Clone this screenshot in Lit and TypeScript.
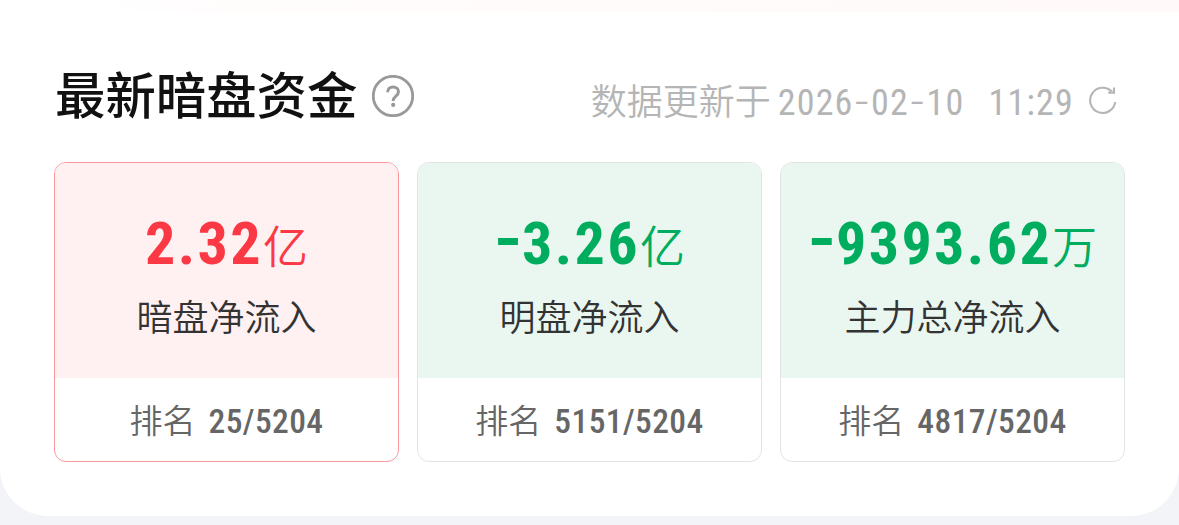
import { LitElement, html, css, svg } from 'lit';
import { customElement, property } from 'lit/decorators.js';

export type FlowTone = 'up' | 'down';

interface FlowItem {
  tone: FlowTone;
  value: string;
  unit: string;
  label: string;
  rank: string;
}

const FLOWS: FlowItem[] = [
  { tone: 'up', value: '2.32', unit: '亿', label: '暗盘净流入', rank: '25/5204' },
  { tone: 'down', value: '-3.26', unit: '亿', label: '明盘净流入', rank: '5151/5204' },
  { tone: 'down', value: '-9393.62', unit: '万', label: '主力总净流入', rank: '4817/5204' },
];

const helpIcon = svg`
  <circle cx="21" cy="21" r="19.7" stroke="#999" stroke-width="2.8" />
  <path d="M15.6 17.3c0-3.4 2.3-5.4 5.5-5.4s5.4 2 5.4 4.9c0 4.3-5.3 4.4-5.3 8.8v.4" stroke="#999" stroke-width="3" />
  <circle cx="21.2" cy="29.9" r="2.1" fill="#999" />
`;

const refreshIcon = svg`
  <path d="M26.2 16.2A12.6 12.6 0 1 1 22.8 5.6" stroke="#b5b5b5" stroke-width="2.1" />
  <path d="M19.2 6.6H25V1.6" stroke="#b5b5b5" stroke-width="2.1" />
`;

// Roboto's hyphen is too short beside these digits, so it gets its own span.
const withDashes = (text: string) =>
  text.split('-').map((part, i) => (i ? html`<span class="dash">-</span>${part}` : part));

@customElement('flow-card')
export class FlowCard extends LitElement {
  @property({ reflect: true }) tone: FlowTone = 'up';
  @property() value = '';
  @property() unit = '';
  @property() label = '';
  @property() rank = '';

  static styles = css`
    :host {
      display: flex;
      flex-direction: column;
      box-sizing: border-box;
      height: 300px;
      border: 1px solid #e2e4e4;
      border-radius: 12px;
      overflow: hidden;
      background: #fff;
    }
    :host([tone='up']) {
      --_fg: #fb3944;
      --_bg: #fff0f1;
      border-color: #fb969c;
    }
    :host([tone='down']) {
      --_fg: #00ad5e;
      --_bg: #eaf7f1;
    }
    .body {
      display: flex;
      flex: none;
      flex-direction: column;
      align-items: center;
      height: 215px;
      box-sizing: border-box;
      padding-top: 43px;
      background: var(--_bg);
    }
    .amount {
      display: flex;
      align-items: baseline;
      height: 76px;
      line-height: 76px;
      color: var(--_fg);
      white-space: nowrap;
    }
    .value {
      font-family: Roboto, sans-serif;
      font-size: 60px;
      font-weight: 700;
      font-stretch: 75%;
      letter-spacing: 2.4px;
    }
    .dash {
      font-family: Inter, sans-serif;
      letter-spacing: 0;
      line-height: 0;
      vertical-align: 5px;
    }
    .unit {
      font-size: 45px;
      font-weight: 350;
    }
    .label {
      height: 54px;
      margin-top: 6px;
      line-height: 54px;
      font-size: 36px;
      font-weight: 350;
      color: #333;
    }
    .rank {
      display: flex;
      flex: 1;
      align-items: baseline;
      justify-content: center;
      gap: 13px;
      line-height: 82px;
      font-size: 33px;
      font-weight: 350;
      color: #666;
    }
    .place {
      font-family: Roboto, sans-serif;
      font-size: 33.5px;
      font-weight: 500;
      font-stretch: 75%;
      letter-spacing: 0.4px;
    }
  `;

  render() {
    return html`
      <div class="body">
        <div class="amount"><span class="value">${withDashes(this.value)}</span><span class="unit">${this.unit}</span></div>
        <div class="label">${this.label}</div>
      </div>
      <div class="rank"><span>排名</span><span class="place">${this.rank}</span></div>
    `;
  }
}

@customElement('app-root')
export class AppRoot extends LitElement {
  static styles = css`
    :host {
      display: block;
      height: 525px;
      overflow: hidden;
      background: #f3f4f8;
      font-family: 'Noto Sans CJK SC', sans-serif;
    }
    .strip {
      height: 12px;
      background: linear-gradient(90deg, #fff 8%, #fffcfc 20%, #fffbfb 60%, #fff9f9);
    }
    .panel {
      box-sizing: border-box;
      height: 504px;
      padding: 48px 54px 0;
      border-radius: 0 0 48px 48px;
      background: #fff;
    }
    .head {
      display: flex;
      align-items: center;
      height: 74px;
    }
    .title {
      margin: 0 0 8px 1px;
      font-size: 50.4px;
      font-weight: 500;
      line-height: 74px;
      color: #111;
    }
    svg {
      display: block;
      flex: none;
      fill: none;
    }
    .help {
      width: 42px;
      height: 42px;
      margin: 0 0 2px 14.5px;
    }
    .updated {
      display: flex;
      align-items: baseline;
      margin-left: auto;
      padding-top: 7px;
      line-height: 54px;
      font-size: 36px;
      font-weight: 350;
      color: #b5b5b5;
      white-space: nowrap;
    }
    .stamp {
      margin-left: 7px;
      font-family: Roboto, sans-serif;
      font-weight: 400;
      font-stretch: 75%;
      letter-spacing: 1.2px;
    }
    .dash {
      font-family: Inter, sans-serif;
      font-weight: 350;
      line-height: 0;
      vertical-align: 1px;
    }
    .clock {
      margin-left: 24px;
    }
    .refresh {
      width: 28px;
      height: 29px;
      margin: 7px 8px 0 15px;
    }
    .cards {
      display: grid;
      grid-template-columns: repeat(3, 1fr);
      gap: 18px;
      margin-top: 28px;
    }
  `;

  render() {
    return html`
      <div class="strip"></div>
      <section class="panel">
        <header class="head">
          <h2 class="title">最新暗盘资金</h2>
          <svg class="help" viewBox="0 0 42 42">${helpIcon}</svg>
          <div class="updated">
            <span>数据更新于</span>
            <span class="stamp">${withDashes('2026-02-10')}</span>
            <span class="stamp clock">11:29</span>
          </div>
          <svg class="refresh" viewBox="0 0 28 29">${refreshIcon}</svg>
        </header>
        <div class="cards">
          ${FLOWS.map(
            (item) => html`
              <flow-card
                tone=${item.tone}
                .value=${item.value}
                .unit=${item.unit}
                .label=${item.label}
                .rank=${item.rank}
              ></flow-card>
            `
          )}
        </div>
      </section>
    `;
  }
}

declare global {
  interface HTMLElementTagNameMap {
    'flow-card': FlowCard;
    'app-root': AppRoot;
  }
}
